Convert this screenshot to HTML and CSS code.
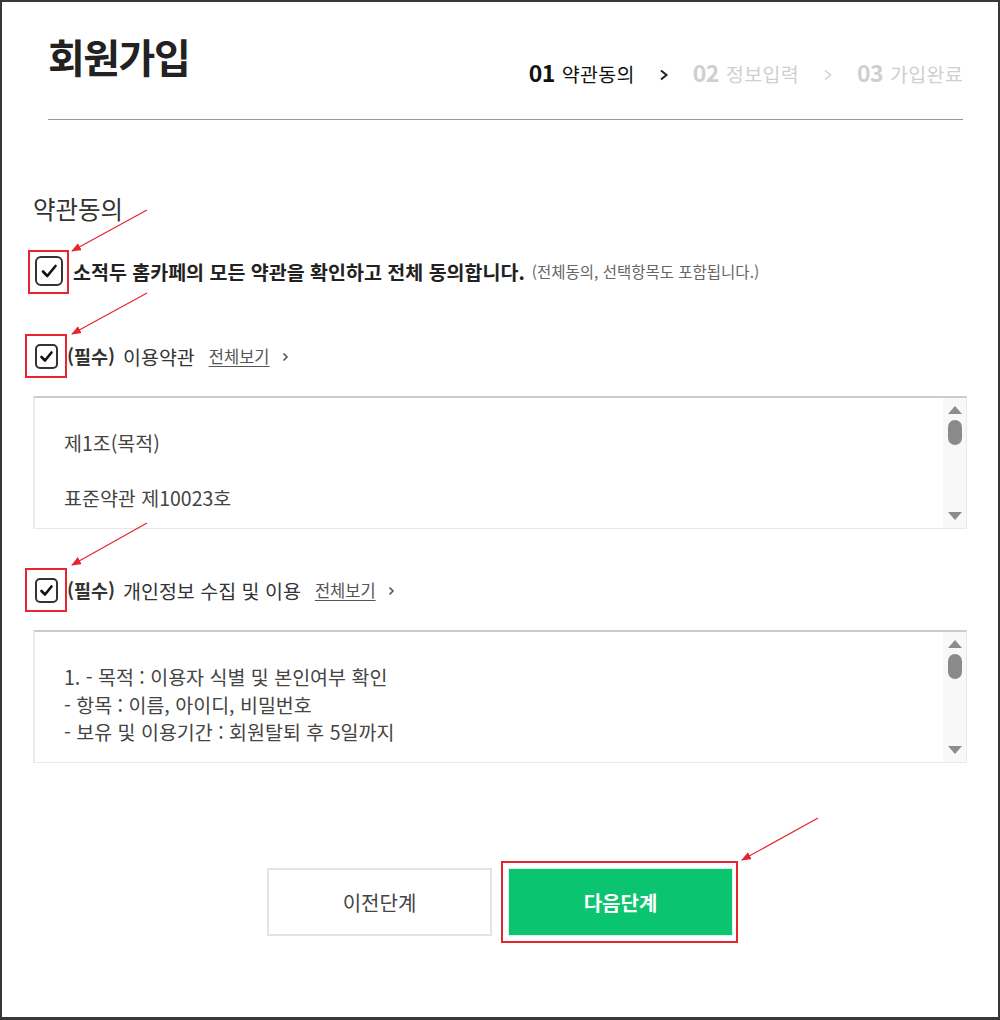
FILE: index.html
```html
<!DOCTYPE html>
<html lang="ko">
<head>
<meta charset="utf-8">
<title>회원가입</title>
<link rel="stylesheet" href="styles.css">
</head>
<body>
<div class="frame">
  <header class="header">
    <h1 class="title">회원가입</h1>
    <ol class="steps">
      <li class="step active"><b class="num">01</b><span class="label">약관동의</span></li>
      <li class="chev active"><svg width="10" height="12" viewBox="0 0 10 12"><polyline points="2,1.5 7.5,6 2,10.5" fill="none" stroke="currentColor" stroke-width="2"/></svg></li>
      <li class="step"><b class="num">02</b><span class="label">정보입력</span></li>
      <li class="chev"><svg width="10" height="12" viewBox="0 0 10 12"><polyline points="2,1.5 7.5,6 2,10.5" fill="none" stroke="currentColor" stroke-width="1.6"/></svg></li>
      <li class="step"><b class="num">03</b><span class="label">가입완료</span></li>
    </ol>
  </header>

  <main class="section">
    <h2 class="sec-title">약관동의</h2>

    <div class="row row-all">
      <span class="cb cb-lg"><svg viewBox="0 0 28 30" width="28" height="30"><rect x="1" y="1" width="26" height="28" rx="5" fill="#fff" stroke="#333" stroke-width="2"/><path d="M8 15.5 L12.3 20 L20.5 10" fill="none" stroke="#111" stroke-width="2.6" stroke-linecap="round" stroke-linejoin="round"/></svg></span>
      <strong class="all-text">소적두 홈카페의 모든 약관을 확인하고 전체 동의합니다.</strong>
      <span class="all-sub">(전체동의, 선택항목도 포함됩니다.)</span>
    </div>

    <div class="row row-item row-terms">
      <span class="cb cb-sm"><svg viewBox="0 0 23 25" width="23" height="25"><rect x="1" y="1" width="21" height="23" rx="4" fill="#fff" stroke="#333" stroke-width="2"/><path d="M6.5 13 L10 16.5 L16.5 8.5" fill="none" stroke="#111" stroke-width="2.6" stroke-linecap="round" stroke-linejoin="round"/></svg></span>
      <strong class="req">(필수)</strong>
      <span class="item-label">이용약관</span>
      <a class="more">전체보기</a>
      <svg class="more-chev" width="7" height="10" viewBox="0 0 7 10"><polyline points="1.5,1.5 5,5 1.5,8.5" fill="none" stroke="#555" stroke-width="1.6"/></svg>
    </div>

    <div class="terms">
      <div class="terms-text">제1조(목적)<br><br>표준약관 제10023호</div>
      <div class="scrollbar">
        <span class="sb-up"></span>
        <span class="sb-thumb"></span>
        <span class="sb-space"></span>
        <span class="sb-down"></span>
      </div>
    </div>

    <div class="row row-item row-privacy">
      <span class="cb cb-sm"><svg viewBox="0 0 23 25" width="23" height="25"><rect x="1" y="1" width="21" height="23" rx="4" fill="#fff" stroke="#333" stroke-width="2"/><path d="M6.5 13 L10 16.5 L16.5 8.5" fill="none" stroke="#111" stroke-width="2.6" stroke-linecap="round" stroke-linejoin="round"/></svg></span>
      <strong class="req">(필수)</strong>
      <span class="item-label">개인정보 수집 및 이용</span>
      <a class="more">전체보기</a>
      <svg class="more-chev" width="7" height="10" viewBox="0 0 7 10"><polyline points="1.5,1.5 5,5 1.5,8.5" fill="none" stroke="#555" stroke-width="1.6"/></svg>
    </div>

    <div class="terms terms-privacy">
      <div class="terms-text">1. - 목적 : 이용자 식별 및 본인여부 확인<br>- 항목 : 이름, 아이디, 비밀번호<br>- 보유 및 이용기간 : 회원탈퇴 후 5일까지</div>
      <div class="scrollbar">
        <span class="sb-up"></span>
        <span class="sb-thumb"></span>
        <span class="sb-space"></span>
        <span class="sb-down"></span>
      </div>
    </div>

    <div class="buttons">
      <button class="btn btn-prev" type="button">이전단계</button>
      <button class="btn btn-next" type="button">다음단계</button>
    </div>
  </main>

  <svg class="annot" width="1000" height="1020" viewBox="0 0 1000 1020">
    <defs>
      <marker id="ah" markerWidth="10" markerHeight="8" refX="9" refY="4" orient="auto" markerUnits="userSpaceOnUse">
        <path d="M0,0 L10,4 L0,8 Z" fill="#e52530"/>
      </marker>
    </defs>
    <g fill="none" stroke="#e52530" stroke-width="2">
      <rect x="29" y="251" width="39" height="42"/>
      <rect x="26" y="335" width="40" height="42"/>
      <rect x="26" y="569" width="40" height="42"/>
      <rect x="502" y="862" width="235" height="80"/>
    </g>
    <g stroke="#e52530" stroke-width="1.2" marker-end="url(#ah)">
      <line x1="147" y1="210" x2="72" y2="251"/>
      <line x1="147" y1="293" x2="72" y2="334"/>
      <line x1="147" y1="523" x2="72" y2="565"/>
      <line x1="818" y1="818" x2="742" y2="860"/>
    </g>
  </svg>
</div>
</body>
</html>
```

FILE: styles.css
```css
* {
  box-sizing: border-box;
}

html, body {
  margin: 0;
  padding: 0;
  background: #fff;
}

body {
  font-family: "Noto Sans CJK KR", "Noto Sans", sans-serif;
  color: #333;
}

.frame {
  position: relative;
  width: 1000px;
  height: 1020px;
  border: 2px solid #383838;
  border-bottom-width: 3px;
  background: #fff;
}

/* header */
.header {
  height: 118px;
  margin: 0 35px 0 46px;
  border-bottom: 1px solid #999;
  display: flex;
  justify-content: space-between;
  align-items: flex-start;
}

.title {
  margin: 31px 0 0;
  font-size: 40px;
  line-height: 46px;
  font-weight: 700;
  letter-spacing: -1.5px;
  color: #222;
}

.steps {
  list-style: none;
  margin: 56px 0 0;
  padding: 0;
  display: flex;
  align-items: center;
  gap: 24px;
  color: #cfcfcf;
}

.step {
  display: flex;
  align-items: baseline;
  gap: 7px;
}

.step .num {
  font-size: 23px;
  font-weight: 700;
  line-height: 28px;
  letter-spacing: -0.5px;
}

.step .label {
  font-size: 19.5px;
  line-height: 28px;
  letter-spacing: 0.3px;
}

.step.active {
  color: #111;
}

.chev {
  display: flex;
  align-items: center;
  color: #d2d2d2;
  padding-top: 3px;
}

.chev.active {
  color: #222;
}

/* section */
.section {
  padding: 0 31px;
}

.sec-title {
  margin: 74px 0 0;
  font-size: 24.5px;
  line-height: 30px;
  font-weight: 400;
  color: #333;
}

.row {
  display: flex;
  align-items: center;
}

.cb {
  display: flex;
  flex: none;
  margin-left: 2px;
}

.row-all {
  height: 30px;
  margin-top: 32px;
}

.row-all .cb {
  margin-right: 10px;
}

.all-text {
  font-size: 19.5px;
  font-weight: 700;
  color: #222;
  letter-spacing: 0;
}

.all-sub {
  margin-left: 7px;
  font-size: 15.5px;
  color: #666;
}

.row-item {
  height: 26px;
}

.row-terms {
  margin-top: 57px;
}

.row-privacy {
  margin-top: 48px;
}

.row-item .cb {
  margin-right: 9px;
}

.req {
  font-size: 18.5px;
  font-weight: 700;
  color: #333;
  margin-right: 8px;
}

.item-label {
  font-size: 19.5px;
  color: #333;
}

.more {
  margin-left: 14px;
  font-size: 16.5px;
  color: #555;
  text-decoration: underline;
  text-underline-offset: 3px;
}

.more-chev {
  margin-left: 12px;
  margin-top: 2px;
}

/* terms boxes */
.terms {
  margin-top: 27px;
  height: 133px;
  display: flex;
  border: 1px solid #e8e8e8;
  border-top: 2px solid #cccccc;
  border-left: 2px solid #ececec;
}

.terms-text {
  flex: 1;
  padding: 31px 29px;
  font-size: 19.5px;
  line-height: 27.5px;
  color: #444;
  overflow: hidden;
}

.scrollbar {
  width: 23px;
  background: #f8f8f8;
  display: flex;
  flex-direction: column;
  align-items: center;
  padding: 8px 0 8px;
}

.sb-up {
  width: 0;
  height: 0;
  border-left: 7.5px solid transparent;
  border-right: 7.5px solid transparent;
  border-bottom: 8px solid #8c8c8c;
}

.sb-thumb {
  margin-top: 6px;
  width: 14px;
  height: 25px;
  border-radius: 7px;
  background: #8a8a8a;
}

.sb-space {
  flex: 1;
}

.sb-down {
  width: 0;
  height: 0;
  border-left: 7.5px solid transparent;
  border-right: 7.5px solid transparent;
  border-top: 8px solid #8c8c8c;
}

/* buttons */
.buttons {
  margin-top: 105px;
  display: flex;
  justify-content: center;
  gap: 16px;
}

.btn {
  width: 225px;
  height: 68px;
  font-family: inherit;
  font-size: 20px;
  cursor: pointer;
}

.btn-prev {
  background: #fff;
  border: 2px solid #e4e4e4;
  color: #444;
}

.btn-next {
  background: #0bc46f;
  border: 1px solid #d8f5e6;
  color: #fff;
  font-weight: 700;
}

/* annotation overlay */
.annot {
  position: absolute;
  left: -2px;
  top: -2px;
  pointer-events: none;
}
```
